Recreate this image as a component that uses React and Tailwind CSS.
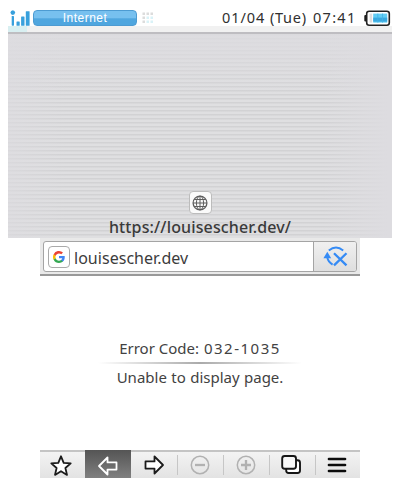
import React from "react";

function Signal() {
  return (
    <svg width="20" height="16" viewBox="0 0 20 16" fill="#38a0dc" className="block shrink-0">
      <path d="M2.8 0.3Q5 0.4 5.1 2.6Q5 4.8 2.8 4.9Q0.6 4.8 0.5 2.6Q0.6 0.4 2.8 0.3Z" />
      <rect x="1.7" y="6" width="2.3" height="9.7" rx=".6" />
      <rect x="6.5" y="11.5" width="3.2" height="4.2" rx=".5" />
      <rect x="11.1" y="6.6" width="3.4" height="9.1" rx=".5" />
      <rect x="15.8" y="1.2" width="3.8" height="14.5" rx=".5" />
    </svg>
  );
}

function Dots() {
  return (
    <svg width="12" height="12" viewBox="0 0 12 12" className="block shrink-0">
      {[0, 4, 8].map((y, r) =>
        [0, 4, 8].map((x, c) => (
          <rect key={x + "-" + y} x={x + 0.5} y={y + 0.5} width="2.500" height="2.500" fill={r > 0 && c > 0 ? "#d9f2f7" : "#dcdcdc"} />
        ))
      )}
    </svg>
  );
}

function Battery() {
  return (
    <svg width="27" height="17" viewBox="0 0 27 17" className="block shrink-0">
      <rect x="0.3" y="5" width="3" height="6.5" rx="1" fill="#1c1c1c" />
      <rect x="2.700" y="1.200" width="22.600" height="14" rx="2.400" fill="#fff" stroke="#222" strokeWidth="1.600" />
      <rect x="5.600" y="3.600" width="2.600" height="9" fill="#dedede" />
      <rect x="9.200" y="3.600" width="14" height="9" fill="#62cdf4" />
      <path d="M9.200 7.600h14v4h-14z" fill="#3aa9df" />
      <path d="M13.800 3.600v9M18.500 3.600v9" stroke="#43b2e6" strokeWidth=".8" />
    </svg>
  );
}

function Globe() {
  return (
    <svg width="16" height="16" viewBox="0 0 16 16" fill="none" stroke="#5e5e5e" strokeWidth="1" className="block">
      <circle cx="8" cy="8" r="6.900" strokeWidth="1.300" />
      <ellipse cx="8" cy="8" rx="3.600" ry="6.900" />
      <path d="M8 1v14M1 8h14M2.200 4.500h11.600M2.200 11.500h11.600" />
    </svg>
  );
}

function Google() {
  return (
    <svg width="12" height="12" viewBox="0 0 24 24" className="block">
      <path fill="#4285F4" d="M23.500 12.300c0-.8-.1-1.600-.2-2.300H12v4.500h6.500a5.600 5.600 0 0 1-2.400 3.600v3h3.900c2.200-2.100 3.500-5.200 3.500-8.800z" />
      <path fill="#34A853" d="M12 24c3.200 0 6-1.100 8-2.900l-3.900-3c-1.100.7-2.500 1.200-4.100 1.200-3.100 0-5.800-2.100-6.700-5H1.300v3.100A12 12 0 0 0 12 24z" />
      <path fill="#FBBC05" d="M5.300 14.300a7.200 7.200 0 0 1 0-4.600V6.600h-4a12 12 0 0 0 0 10.800z" />
      <path fill="#EA4335" d="M12 4.800c1.800 0 3.300.6 4.600 1.800L20 3.100A12 12 0 0 0 1.300 6.600l4 3.100c.9-2.800 3.600-4.900 6.700-4.900z" />
    </svg>
  );
}

function StopReload() {
  return (
    <svg width="26" height="22" viewBox="0 0 26 22" fill="none" stroke="#358bf5" strokeWidth="1.900" className="block">
      <path d="M5.800 4.600Q13 -1.400 20.200 4.600" />
      <path d="M4.300 11.500Q5 15.500 9.600 18.600" />
      <path d="M0.400 12.300L4.300 5.800L8.200 12.300Z" fill="#358bf5" stroke="none" />
      <path d="M11 7.200L23.500 19.400M23.500 7.200L11 19.400" strokeWidth="2.300" />
    </svg>
  );
}

function StatusBar() {
  return (
    <header className="flex h-[26px] shrink-0 pl-[1.500px] pt-[9.500px]">
      <Signal />
      <div className="ml-[3.500px] flex h-4 w-[104px] shrink-0 items-center justify-center rounded-[4px] border border-[#4d9bd2] bg-linear-to-b from-[#77c0ef] from-50% to-[#4fa6df] to-55% font-['Liberation_Sans',sans-serif] text-[12px] leading-none tracking-[.500px] text-white">
        Internet
      </div>
      <div className="ml-[5px] pt-[2px]"><Dots /></div>
      <div className="ml-auto flex h-4 items-center whitespace-nowrap text-[14.500px] leading-none text-[#303030]">
        <span className="w-[44px] tracking-[.900px]">01/04</span>
        <span className="ml-[4px] w-[38px] tracking-[.700px]">(Tue)</span>
        <span className="ml-[5px] w-[44px] tracking-[1.300px]">07:41</span>
      </div>
      <div className="ml-[7px] mr-[1px]"><Battery /></div>
    </header>
  );
}

function TopScreen() {
  return (
    <section className="flex h-[238px] w-[384px] flex-col">
      <StatusBar />
      <div className="flex h-[8px] shrink-0 flex-col border-b-2 border-[#bebdc1] bg-[#f1f1f1]">
        <div className="h-[6px] w-[19px] bg-[#d8eff1]" />
      </div>
      <div className="flex-1 bg-[#dddce0] bg-[repeating-linear-gradient(to_bottom,#d2d2d4_0px,#d2d2d4_1px,#dfdfe1_2px,#dfdfe1_4px)]">
        <div className="h-full bg-linear-to-b from-[#dddce0cc] from-5% to-[#dddce000] to-30%">
          <div className="flex h-full flex-col items-center bg-[linear-gradient(to_right,#dddce0aa,#dddce000_15%,#dddce000_82%,#dddce0_99%)] pt-[157px]">
            <div className="flex size-[23px] items-center justify-center rounded-[4px] border border-[#bcbcbc] bg-[#fafafa]"><Globe /></div>
            <div className="mt-[3px] whitespace-nowrap text-[16px] font-medium leading-[21px] tracking-[.140px] text-[#3a3a3a]">https://louisescher.dev/</div>
          </div>
        </div>
      </div>
    </section>
  );
}

function AddressBar() {
  return (
    <div className="flex h-[38px] shrink-0 border-b-2 border-[#999] bg-[#e9e9e9] px-[3px] pt-[3px]">
      <div className="flex h-[31px] w-full overflow-hidden rounded-[3px] border border-[#a4a4a4] bg-white">
        <div className="ml-[4px] mt-[4px] flex size-[22px] shrink-0 items-center justify-center rounded-[4px] border border-[#aaa] bg-white"><Google /></div>
        <div className="ml-[4px] flex-1 pt-[5px] text-[16px] leading-[22px] tracking-[.030px] text-[#3c3c3c]">louisescher.dev</div>
        <div className="flex w-[43px] items-center justify-center border-l border-[#a4a4a4] bg-linear-to-b from-[#f0f0f0] to-[#dedede] pl-[2px]"><StopReload /></div>
      </div>
    </div>
  );
}

const Star = () => (
  <svg width="24" height="24" viewBox="0 0 24 24" className="block"><path d="M12 2.300L14.700 8.800L21.700 9.400L16.400 14L18 20.900L12 17.200L6 20.900L7.600 14L2.300 9.400L9.300 8.800Z" fill="#fff" stroke="#1b1b1b" strokeWidth="1.800" strokeLinejoin="round" /></svg>
);
const Arrow = ({ back }) => (
  <svg width="22" height="22" viewBox="0 0 22 22" className={back ? "block" : "block -scale-x-100"}><path d="M2 11L10.500 2.500V7.400H19.500V14.600H10.500V19.500Z" fill={back ? "none" : "#fff"} stroke={back ? "#fff" : "#1b1b1b"} strokeWidth="1.800" strokeLinejoin="round" /></svg>
);
const Zoom = ({ plus }) => (
  <svg width="22" height="22" viewBox="0 0 22 22" fill="none" stroke="#b1b1b1" className="block"><circle cx="11" cy="11" r="8.700" strokeWidth="1.500" /><path d={plus ? "M6 11h10M11 6v10" : "M6 11h10"} strokeWidth="2.300" /></svg>
);
const Pages = () => (
  <svg width="22" height="22" viewBox="0 0 22 22" stroke="#151515" strokeWidth="1.900" className="block"><rect x="6.200" y="6.300" width="13.800" height="12.700" rx="2.500" fill="#fff" /><rect x="2.200" y="2" width="13.800" height="12.700" rx="2.500" fill="#f7f7f7" /></svg>
);
const Menu = () => (
  <svg width="20" height="18" viewBox="0 0 20 18" className="block"><path d="M2 3h16M2 9h16M2 15h16" stroke="#0c0c0c" strokeWidth="2.700" strokeLinecap="round" /></svg>
);

function Toolbar() {
  return (
    <nav className="flex h-[28px] shrink-0 border-t-2 border-[#c4c4c4] bg-linear-to-b from-[#f3f3f3] to-[#e3e3e3]">
      <div className="flex w-[45px] items-center justify-center pr-[3px] pt-px"><Star /></div>
      <div className="-mt-[2px] flex w-[46px] items-center justify-center bg-linear-to-b from-[#555] to-[#808080] pt-[3px] pr-px"><Arrow back /></div>
      <div className="flex w-[46px] items-center justify-center pr-px"><Arrow /></div>
      <div className="my-[3px] flex w-[46px] items-center justify-center border-l border-[#c6c6c6] pr-[2px]"><Zoom /></div>
      <div className="my-[3px] flex w-[46px] items-center justify-center border-l border-[#c6c6c6] pr-[2px]"><Zoom plus /></div>
      <div className="my-[3px] flex w-[46px] items-center justify-center border-l border-[#c6c6c6] pr-[3px]"><Pages /></div>
      <div className="my-[3px] flex w-[45px] items-center justify-center border-l border-[#c6c6c6] pr-[2px]"><Menu /></div>
    </nav>
  );
}

export default function App() {
  return (
    <div className="flex h-[487px] w-[400px] flex-col items-center overflow-hidden bg-white font-['Noto_Sans',sans-serif]">
      <TopScreen />
      <section className="flex h-[240px] w-[320px] flex-col">
        <AddressBar />
        <main className="flex flex-1 flex-col items-center pt-[62px] text-[15px] leading-[20px] text-[#424242]">
          <p className="whitespace-pre">Error Code: <span className="ml-[1px] tracking-[1.500px]">032-1035</span></p>
          <div className="mb-[3px] mt-[4px] h-[1.500px] w-[204px] bg-linear-to-r from-transparent via-[#aaa] to-transparent" />
          <p className="whitespace-nowrap tracking-[.000px] [word-spacing:.5px]">Unable to display page.</p>
        </main>
        <Toolbar />
      </section>
    </div>
  );
}
